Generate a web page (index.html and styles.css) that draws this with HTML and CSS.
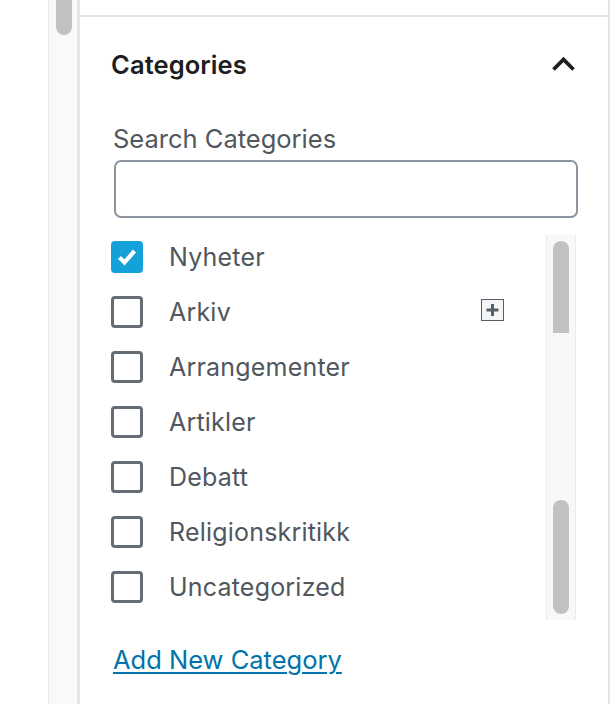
FILE: index.html
```html
<!DOCTYPE html>
<html lang="en">
<head>
<meta charset="utf-8">
<link rel="stylesheet" href="styles.css">
</head>
<body>
<div class="page">
  <div class="gutter"></div>
  <div class="outer-track"><div class="outer-thumb"></div></div>
  <div class="panel">
    <div class="prev-section"></div>
    <section class="cats">
      <div class="cats-head">
        <h2 class="cats-title">Categories</h2>
        <svg class="chevron" width="25" height="17" viewBox="0 0 25 17"><path d="M2.5 14.5 L12.5 4.5 L22.5 14.5" fill="none" stroke="#1e1e1e" stroke-width="3.8"/></svg>
      </div>
      <label class="search-label">Search Categories</label>
      <input class="search-input" type="text">
      <div class="list-wrap">
        <ul class="list">
          <li class="row"><span class="cb checked"><svg width="32" height="32" viewBox="0 0 32 32"><path d="M8.5 16.5 L13.5 21.5 L23.5 10" fill="none" stroke="#fff" stroke-width="4.2"/></svg></span><span class="name">Nyheter</span></li>
          <li class="row"><span class="cb"></span><span class="name">Arkiv</span><span class="plus"><svg width="21" height="20" viewBox="0 0 21 20"><path d="M4.5 10 H16.5 M10.5 4 V16" stroke="#555d66" stroke-width="3"/></svg></span></li>
          <li class="row"><span class="cb"></span><span class="name">Arrangementer</span></li>
          <li class="row"><span class="cb"></span><span class="name">Artikler</span></li>
          <li class="row"><span class="cb"></span><span class="name">Debatt</span></li>
          <li class="row"><span class="cb"></span><span class="name">Religionskritikk</span></li>
          <li class="row"><span class="cb"></span><span class="name">Uncategorized</span></li>
        </ul>
        <div class="inner-track">
          <div class="inner-thumb thumb-a"></div>
          <div class="inner-thumb thumb-b"></div>
        </div>
      </div>
      <a class="add-link" href="#">Add New Category</a>
    </section>
  </div>
  <div class="right-edge"></div>
</div>
</body>
</html>
```

FILE: styles.css
```css
* { box-sizing: border-box; }
html, body { margin: 0; padding: 0; background: #fff; }
body { font-family: Inter, "Noto Sans", "Liberation Sans", sans-serif; }

.page {
  display: flex;
  height: 704px;
  overflow: hidden;
}
.gutter { width: 48px; flex: none; }

.outer-track {
  width: 32px;
  flex: none;
  background: #f9f9f9;
  border-left: 1px solid #e6e6e6;
  border-right: 3px solid #e4e5e8;
  padding-left: 7px;
}
.outer-thumb {
  width: 16px;
  height: 35px;
  background: #c1c1c1;
  border-radius: 0 0 8px 8px;
}

.panel {
  width: 530px;
  flex: none;
  border-right: 2px solid #e2e4e7;
  display: flex;
  flex-direction: column;
}
.prev-section {
  height: 17px;
  border-bottom: 2px solid #e2e4e7;
}

.cats {
  padding: 23px 32px 0 32px;
  display: flex;
  flex-direction: column;
}
.cats-head {
  height: 48px;
  display: flex;
  align-items: center;
  justify-content: space-between;
}
.cats-title {
  margin: 0;
  font-size: 25.5px;
  font-weight: 600;
  color: #1e1e1e;
  letter-spacing: 0.1px;
  margin-left: -1px;
}
.chevron { margin-top: -1px; margin-right: 0; }

.search-label {
  margin-top: 36px;
  height: 30px;
  line-height: 30px;
  font-size: 25.5px;
  color: #50575e;
  padding-left: 1px;
}
.search-input {
  margin: 6px 0 0 2px;
  width: 464px;
  height: 58px;
  border: 2px solid #8d96a0;
  border-radius: 7px;
  background: #fff;
  font: inherit;
}

.list-wrap {
  margin-top: 17px;
  height: 385px;
  display: flex;
}
.list {
  list-style: none;
  margin: 0;
  padding: 6px 0 0 0;
  flex: 1;
  display: flex;
  flex-direction: column;
  gap: 23px;
}
.row {
  height: 32px;
  display: flex;
  align-items: center;
}
.cb {
  width: 32px;
  height: 32px;
  flex: none;
  border: 3px solid #656c74;
  border-radius: 4px;
  margin-left: -1px;
  margin-right: 26px;
  position: relative;
}
.cb.checked {
  border: none;
  background: #14a0d8;
}
.cb svg { display: block; }
.name {
  font-size: 25px;
  color: #50575e;
  letter-spacing: 0.2px;
}
.plus {
  margin-left: auto;
  margin-right: 42px;
  margin-top: -5px;
  width: 23px;
  height: 22px;
  border: 1px solid #555d66;
  background: #f3f4f5;
  display: flex;
  align-items: center;
  justify-content: center;
}
.plus svg { display: block; }

.inner-track {
  width: 30px;
  flex: none;
  background: #f8f8f8;
  border-left: 1px solid #ececec;
  border-right: 1px solid #ececec;
  display: flex;
  flex-direction: column;
  align-items: center;
  padding-top: 6px;
}
.inner-thumb {
  width: 16px;
  background: #c1c1c1;
}
.thumb-a {
  height: 92px;
  border-radius: 8px 8px 0 0;
}
.thumb-b {
  margin-top: 167px;
  height: 114px;
  border-radius: 8px;
}

.add-link {
  margin-top: 25px;
  height: 30px;
  line-height: 30px;
  font-size: 25.5px;
  color: #0073aa;
  text-decoration: underline;
  text-underline-offset: 3px;
  text-decoration-thickness: 2px;
  align-self: flex-start;
  padding-left: 1px;
}

.right-edge { width: 2px; flex: none; }
```
